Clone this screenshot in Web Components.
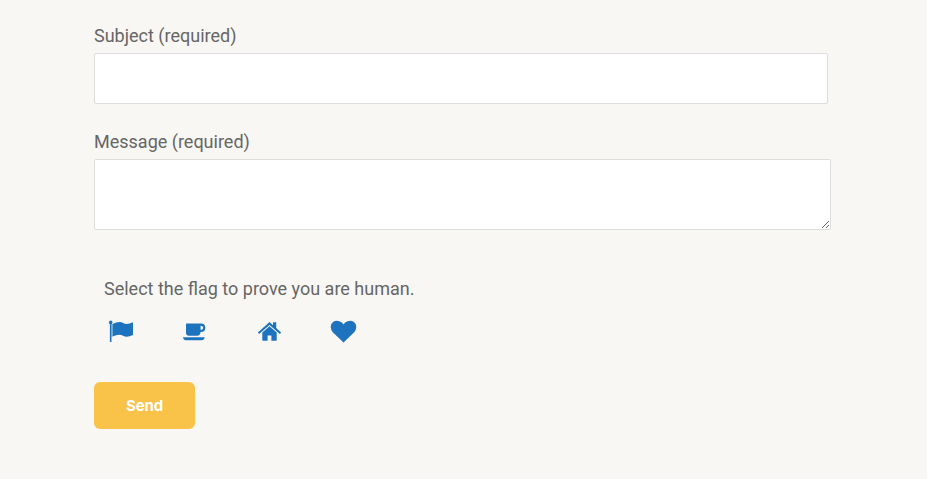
<!DOCTYPE html>
<html lang="en"><head><meta charset="utf-8"><title>Contact</title>
<style>body{margin:0;background:#f8f7f3;color:#666;font:18px/27px Roboto,"Liberation Sans",sans-serif}</style></head>
<body><contact-form></contact-form>
<script>
const define=(name,html)=>customElements.define(name,class extends HTMLElement{connectedCallback(){this.attachShadow({mode:'open'}).innerHTML=html}});
define('form-field',`<style>:host{display:block}label{display:block;height:27px;margin-bottom:4px}</style><label><slot name="label"></slot></label><slot></slot>`);
define('icon-choice',`<style>:host{display:block;width:27px;height:26px}::slotted(svg){display:block;width:27px;height:26px;fill:#1e73be}</style><slot></slot>`);
define('send-button',`<style>:host{display:block}button{display:block;width:101px;height:47px;border:0;border-radius:6px;background:#f9c349;color:#fff;font:700 15px/20px Inter,sans-serif;letter-spacing:-.1px;padding:0}</style><button><slot></slot></button>`);
define('contact-form',`<style>
:host{display:block;height:479px;box-sizing:border-box;padding:22px 96px 0 94px;overflow:hidden}
input,textarea{display:block;box-sizing:border-box;border:1px solid #ddd;border-radius:2px;background:#fff;padding:12px;margin:0;font:18px Roboto,sans-serif;outline:0}
input{width:734px;height:51px}textarea{width:737px;height:71px;overflow:auto}
.message{margin-top:24px}.captcha{padding-left:10px;margin-top:45px}.choices{display:flex;gap:47px;margin:16px 0 38px 4px}
</style>
<form-field><span slot="label">Subject (required)</span><input></form-field>
<form-field class="message"><span slot="label">Message (required)</span><textarea></textarea></form-field>
<div class="captcha"><div>Select the flag to prove you are human.</div><div class="choices">
<icon-choice><svg viewBox="0 0 27 26"><circle cx="2.7" cy="4.4" r="1.8"/><path d="M1.900 5h1.600v19H1.900z"/><path d="M3.500 6h1v13h-1z" opacity=".4"/><path d="M4.500 6.100Q11.500 2.500 15.500 5.300q3.500 1.800 9.500-1v12.600q-6 3-9.500 1-4.500-2.400-11 .7z"/></svg></icon-choice>
<icon-choice><svg viewBox="0 0 27 26"><path fill-rule="evenodd" d="M4 6q0-.5.500-.5h14.500q4.300 0 4.300 4.300T19 14.100h-.4q-.3 3.600-3.300 3.600H7Q4 17.700 4 14.700zm14.600 1.700v4.200q2.600 0 2.600-2.100t-2.600-2.100zM1 19.300h21.700q-.4 3-3 3H4q-2.600 0-3-3z"/></svg></icon-choice>
<icon-choice><svg viewBox="0 0 27 26"><g transform="translate(.5)"><path d="M13 4.100l3.500 3.100V4.200h3.200v5.900l4.900 4.500-1.200 1.500L13 6.900 2.600 16.100l-1.200-1.500z"/><path d="M13 8.200l7.200 6.300V22q0 .8-.8.800h-4.500v-5.200h-3.800v5.200H6.600q-.8 0-.8-.8v-7.500z"/></g></svg></icon-choice>
<icon-choice><svg viewBox="0 0 27 26"><path d="M13.500 24.600L2.800 14.200Q-.4 10 1.400 6.100C3 2.700 6.500 2 9.500 3.200q2.800 1 4 3.400 1.200-2.400 4-3.400c3-1.200 6.500-.5 8.100 2.900q1.800 3.900-1.400 8.100z"/></svg></icon-choice></div></div>
<send-button>Send</send-button>`);
</script></body></html>
